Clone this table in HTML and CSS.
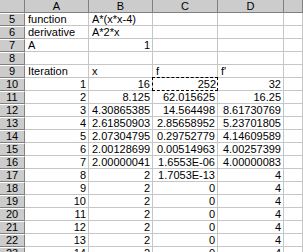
FILE: index.html
```html
<!DOCTYPE html>
<html>
<head>
<meta charset="utf-8">
<link rel="stylesheet" href="styles.css">
</head>
<body>
<div class="sheet">
  <div class="ch corner"></div><div class="ch">A</div><div class="ch">B</div><div class="ch">C</div><div class="ch">D</div><div class="ch last"></div>

  <div class="rh">5</div><div class="c">function</div><div class="c">A*(x*x-4)</div><div class="c"></div><div class="c"></div><div class="c"></div>
  <div class="rh">6</div><div class="c">derivative</div><div class="c">A*2*x</div><div class="c"></div><div class="c"></div><div class="c"></div>
  <div class="rh">7</div><div class="c">A</div><div class="c n">1</div><div class="c"></div><div class="c"></div><div class="c"></div>
  <div class="rh">8</div><div class="c"></div><div class="c"></div><div class="c"></div><div class="c"></div><div class="c"></div>
  <div class="rh">9</div><div class="c">Iteration</div><div class="c">x</div><div class="c">f</div><div class="c">f'</div><div class="c"></div>
  <div class="rh">10</div><div class="c n">1</div><div class="c n">16</div><div class="c n sel">252</div><div class="c n">32</div><div class="c"></div>
  <div class="rh">11</div><div class="c n">2</div><div class="c n">8.125</div><div class="c n">62.015625</div><div class="c n">16.25</div><div class="c"></div>
  <div class="rh">12</div><div class="c n">3</div><div class="c n">4.30865385</div><div class="c n">14.564498</div><div class="c n">8.61730769</div><div class="c"></div>
  <div class="rh">13</div><div class="c n">4</div><div class="c n">2.61850903</div><div class="c n">2.85658952</div><div class="c n">5.23701805</div><div class="c"></div>
  <div class="rh">14</div><div class="c n">5</div><div class="c n">2.07304795</div><div class="c n">0.29752779</div><div class="c n">4.14609589</div><div class="c"></div>
  <div class="rh">15</div><div class="c n">6</div><div class="c n">2.00128699</div><div class="c n">0.00514963</div><div class="c n">4.00257399</div><div class="c"></div>
  <div class="rh">16</div><div class="c n">7</div><div class="c n">2.00000041</div><div class="c n">1.6553E-06</div><div class="c n">4.00000083</div><div class="c"></div>
  <div class="rh">17</div><div class="c n">8</div><div class="c n">2</div><div class="c n">1.7053E-13</div><div class="c n">4</div><div class="c"></div>
  <div class="rh">18</div><div class="c n">9</div><div class="c n">2</div><div class="c n">0</div><div class="c n">4</div><div class="c"></div>
  <div class="rh">19</div><div class="c n">10</div><div class="c n">2</div><div class="c n">0</div><div class="c n">4</div><div class="c"></div>
  <div class="rh">20</div><div class="c n">11</div><div class="c n">2</div><div class="c n">0</div><div class="c n">4</div><div class="c"></div>
  <div class="rh">21</div><div class="c n">12</div><div class="c n">2</div><div class="c n">0</div><div class="c n">4</div><div class="c"></div>
  <div class="rh">22</div><div class="c n">13</div><div class="c n">2</div><div class="c n">0</div><div class="c n">4</div><div class="c"></div>
  <div class="rh">23</div><div class="c n">14</div><div class="c n">2</div><div class="c n">0</div><div class="c n">4</div><div class="c"></div>
</div>
</body>
</html>
```
FILE: styles.css
```css
html, body {
  margin: 0;
  padding: 0;
  background: #ffffff;
  overflow: hidden;
}
.sheet {
  display: grid;
  grid-template-columns: 25px 64px 64px 65px 66px minmax(0, 1fr);
  grid-auto-rows: 13px;
  font-family: "Liberation Sans", Arial, sans-serif;
  font-size: 11px;
  color: #000;
  width: 100%;
}
.sheet > div {
  box-sizing: border-box;
  line-height: 12px;
  white-space: nowrap;
  overflow: hidden;
}
.ch {
  background: #cccccc;
  border-right: 1px solid #808080;
  border-bottom: 1px solid #808080;
  text-align: center;
}
.rh {
  background: #cccccc;
  border-top: 1px solid #ffffff;
  border-right: 1px solid #808080;
  border-bottom: 1px solid #808080;
  text-align: center;
  line-height: 11px !important;
}
.c {
  border-right: 1px solid #c6c6c6;
  border-bottom: 1px solid #c6c6c6;
  padding: 0 2px 0 3px;
}
.n {
  text-align: right;
}
.sel {
  border: 1px dashed #000000;
  margin-top: -1px;
  margin-left: -1px;
  height: 14px;
  line-height: 13px !important;
  padding-right: 1px;
}
```
